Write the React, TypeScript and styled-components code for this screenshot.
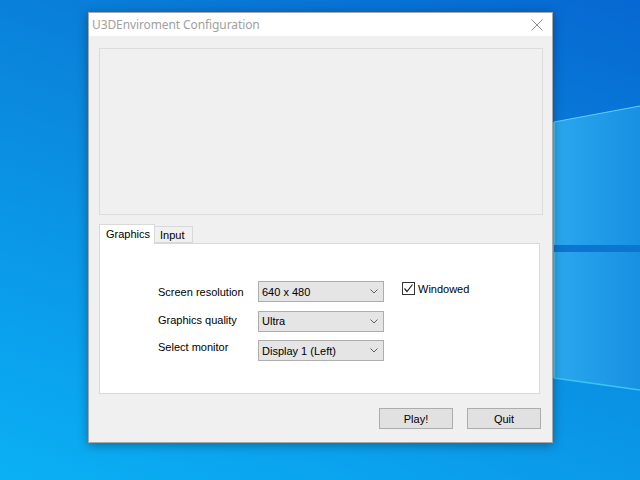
import React from "react";
import styled, { createGlobalStyle } from "styled-components";

const Global = createGlobalStyle`
  html, body { margin: 0; padding: 0; }
  body { width: 640px; height: 480px; overflow: hidden; font-family: "Liberation Sans", Arial, sans-serif; }
`;

const Desktop = styled.div`
  position: relative;
  width: 640px;
  height: 480px;
  overflow: hidden;
  box-sizing: border-box;
  padding: 12px 0 0 88px;
  background: linear-gradient(200deg, #0668d2 0%, #0a86dc 40%, #0aa2ee 80%, #0bb0f4 100%);
`;

const Wallpaper = styled.svg`
  position: absolute;
  inset: 0;
  z-index: 0;
`;

const Window = styled.div`
  position: relative;
  z-index: 1;
  width: 465px;
  height: 431px;
  box-sizing: border-box;
  border: 1px solid #a8a8a8;
  background: #f0f0f0;
  box-shadow: 0 2px 10px rgba(0, 0, 0, 0.35);
  display: flex;
  flex-direction: column;
`;

const TitleBar = styled.div`
  height: 23px;
  background: #ffffff;
  display: flex;
  align-items: center;
  justify-content: space-between;
  padding: 0 9px 0 3px;
`;

const Title = styled.span`
  font-family: "Noto Sans", "Open Sans", sans-serif;
  font-size: 12px;
  color: #a0a0a0;
  letter-spacing: -0.1px;
`;

const Close = styled.svg`
  width: 12px;
  height: 12px;
`;

const Body = styled.div`
  flex: 1;
  display: flex;
  flex-direction: column;
  padding: 12px 9px 0 10px;
`;

const Preview = styled.div`
  height: 167px;
  border: 1px solid #dcdcdc;
  box-sizing: border-box;
  background: #f0f0f0;
`;

const Tabs = styled.div`
  margin-top: 9px;
  margin-right: 3px;
  display: flex;
  flex-direction: column;
`;

const TabStrip = styled.div`
  display: flex;
  align-items: flex-end;
  height: 19px;
  position: relative;
  z-index: 1;
`;

const Tab = styled.div<{ $active?: boolean }>`
  box-sizing: border-box;
  height: ${(p) => (p.$active ? "20px" : "17px")};
  margin-bottom: ${(p) => (p.$active ? "-1px" : "0")};
  width: ${(p) => (p.$active ? "56px" : "38px")};
  border: 1px solid #d9d9d9;
  border-bottom: ${(p) => (p.$active ? "none" : "1px solid #d9d9d9")};
  border-left: ${(p) => (p.$active ? "1px solid #d9d9d9" : "none")};
  background: ${(p) => (p.$active ? "#ffffff" : "#f0f0f0")};
  font-size: 11px;
  color: #000;
  display: flex;
  align-items: ${(p) => (p.$active ? "flex-start" : "center")};
  padding-top: ${(p) => (p.$active ? "3px" : "0")};
  padding-left: ${(p) => (p.$active ? "6px" : "5px")};
`;

const Panel = styled.div`
  height: 151px;
  box-sizing: border-box;
  border: 1px solid #d9d9d9;
  background: #ffffff;
  padding: 37px 0 0 58px;
`;

const Form = styled.div`
  display: grid;
  grid-template-columns: 100px 126px auto;
  grid-template-rows: 21px 21px 21px;
  row-gap: 8.5px;
  column-gap: 0;
  align-items: start;
`;

const Label = styled.div<{ $shift: number }>`
  font-size: 11px;
  color: #000;
  line-height: 13px;
  padding-top: ${(p) => p.$shift}px;
`;

const Combo = styled.div`
  box-sizing: border-box;
  height: 21px;
  border: 1px solid #adadad;
  background: #e5e5e5;
  display: flex;
  align-items: center;
  justify-content: space-between;
  padding: 0 5px 0 3px;
  font-size: 11px;
  color: #000;
`;

const Chevron = styled.svg`
  width: 8px;
  height: 5px;
`;

const CheckRow = styled.label`
  display: flex;
  align-items: center;
  gap: 3px;
  margin-left: 18px;
  font-size: 11px;
  color: #000;
  padding-top: 1px;
`;

const Box = styled.span`
  box-sizing: border-box;
  width: 13px;
  height: 13px;
  border: 1px solid #333;
  background: #fff;
  display: flex;
  align-items: center;
  justify-content: center;
`;

const Buttons = styled.div`
  display: flex;
  justify-content: flex-end;
  gap: 14px;
  margin-top: 14px;
  margin-right: 2px;
`;

const Button = styled.div`
  box-sizing: border-box;
  width: 74px;
  height: 21px;
  border: 1px solid #adadad;
  background: #e1e1e1;
  font-size: 11px;
  color: #000;
  display: flex;
  align-items: center;
  justify-content: center;
`;

const rows = [
  { label: "Screen resolution", value: "640 x 480", shift: 5 },
  { label: "Graphics quality", value: "Ultra", shift: 3 },
  { label: "Select monitor", value: "Display 1 (Left)", shift: 1 },
];

const ChevronIcon = () => (
  <Chevron viewBox="0 0 8 5">
    <path d="M0.5 0.5 L4 4 L7.5 0.5" fill="none" stroke="#606060" strokeWidth="1" />
  </Chevron>
);

export default function App() {
  return (
    <Desktop>
      <Global />
      <Wallpaper width="640" height="480" viewBox="0 0 640 480">
        <defs>
          <linearGradient id="pane" x1="0" y1="0" x2="1" y2="0">
            <stop offset="0" stopColor="#2aa8ee" />
            <stop offset="1" stopColor="#1790e2" />
          </linearGradient>
        </defs>
        <polygon points="554,122 640,106 640,245 554,245" fill="url(#pane)" />
        <polygon points="554,252 640,252 640,390 554,378" fill="url(#pane)" />
        <line x1="554" y1="122" x2="640" y2="106" stroke="#5fd0f7" strokeWidth="1" />
        <line x1="554" y1="122" x2="554" y2="378" stroke="#5fd0f7" strokeWidth="1.5" />
        <line x1="554" y1="378" x2="640" y2="390" stroke="#3cc4f4" strokeWidth="1.5" />
        <rect x="554" y="245" width="86" height="7" fill="#0d74cf" />
      </Wallpaper>
      <Window>
        <TitleBar>
          <Title>U3DEnviroment Configuration</Title>
          <Close viewBox="0 0 12 12">
            <path d="M0.5 0.5 L11.5 11.5 M11.5 0.5 L0.5 11.5" stroke="#909090" strokeWidth="1" />
          </Close>
        </TitleBar>
        <Body>
          <Preview />
          <Tabs>
            <TabStrip>
              <Tab $active>Graphics</Tab>
              <Tab>Input</Tab>
            </TabStrip>
            <Panel>
              <Form>
                {rows.map((r, i) => (
                  <React.Fragment key={r.label}>
                    <Label $shift={r.shift}>{r.label}</Label>
                    <Combo>
                      <span>{r.value}</span>
                      <ChevronIcon />
                    </Combo>
                    {i === 0 ? (
                      <CheckRow>
                        <Box>
                          <svg width="11" height="11" viewBox="0 0 11 11">
                            <path d="M1.5 5.5 L4 8.5 L9.5 1.5" fill="none" stroke="#222" strokeWidth="1.2" />
                          </svg>
                        </Box>
                        Windowed
                      </CheckRow>
                    ) : (
                      <span />
                    )}
                  </React.Fragment>
                ))}
              </Form>
            </Panel>
          </Tabs>
          <Buttons>
            <Button>Play!</Button>
            <Button>Quit</Button>
          </Buttons>
        </Body>
      </Window>
    </Desktop>
  );
}
